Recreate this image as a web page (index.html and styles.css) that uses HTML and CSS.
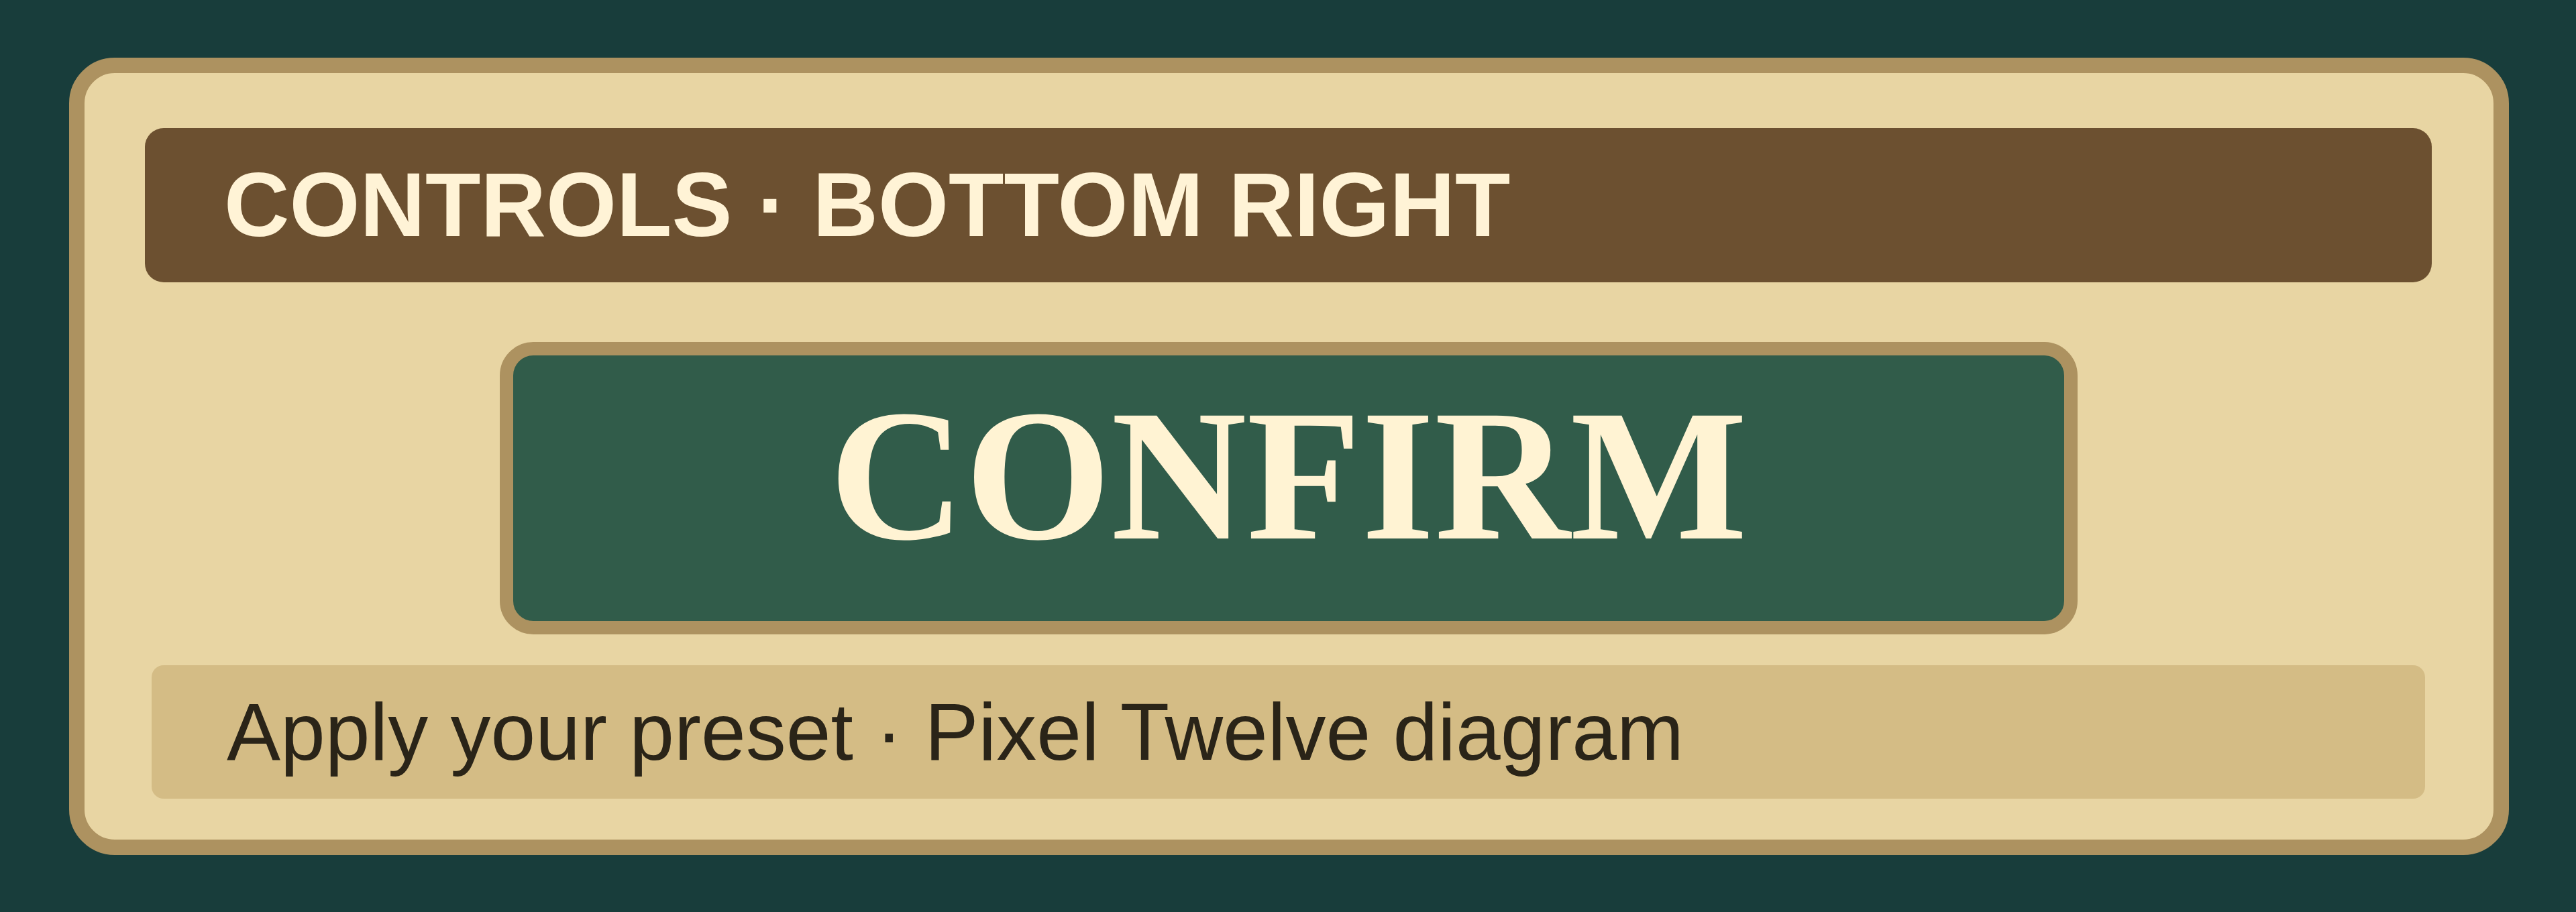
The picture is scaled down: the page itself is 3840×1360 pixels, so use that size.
FILE: index.html
```html
<!DOCTYPE html>
<html lang="en">
  <head>
    <meta charset="UTF-8" />
    <meta name="viewport" content="width=device-width, initial-scale=1.0" />
    <title>Controls</title>
    <link rel="stylesheet" href="styles.css">
  </head>
  <body>
    <div class="panel">
      <div class="panel-title">CONTROLS · BOTTOM RIGHT</div>

      <button class="confirm-button">CONFIRM</button>

      <div class="panel-caption">Apply your preset · Pixel Twelve diagram</div>
    </div>
  </body>
</html>
```

FILE: styles.css
```css
body {
  font-family: "Liberation Sans", Arial, sans-serif;
  background-color: #183d3b;
  margin: 0;
  padding: 86px 100px 0 103px;
}
.panel {
  height: 1189px;
  box-sizing: border-box;
  background-color: #e8d5a3;
  border: 23px solid #ad9260;
  border-radius: 68px;
  padding: 82px 92px 0 90px;
}
.panel-title {
  background-color: #6c5030;
  color: #fff3d6;
  font-weight: bold;
  font-size: 135px;
  line-height: 156px;
  padding: 37px 118px;
  border-radius: 28px;
}
.confirm-button {
  display: block;
  box-sizing: border-box;
  width: 2352px;
  height: 436px;
  margin: 89px auto 46px;
  padding: 39px 0 77px;
  background-color: #315c4a;
  border: 20px solid #ad9260;
  border-radius: 50px;
  color: #fff3d3;
  font-family: "Liberation Serif", "Times New Roman", serif;
  font-weight: bold;
  font-size: 280px;
  line-height: 280px;
  cursor: pointer;
}
.panel-caption {
  margin: 0 10px;
  background-color: #d4bc85;
  color: #2a2418;
  font-size: 120px;
  line-height: 139px;
  padding: 30px 112px;
  border-radius: 18px;
}
```
